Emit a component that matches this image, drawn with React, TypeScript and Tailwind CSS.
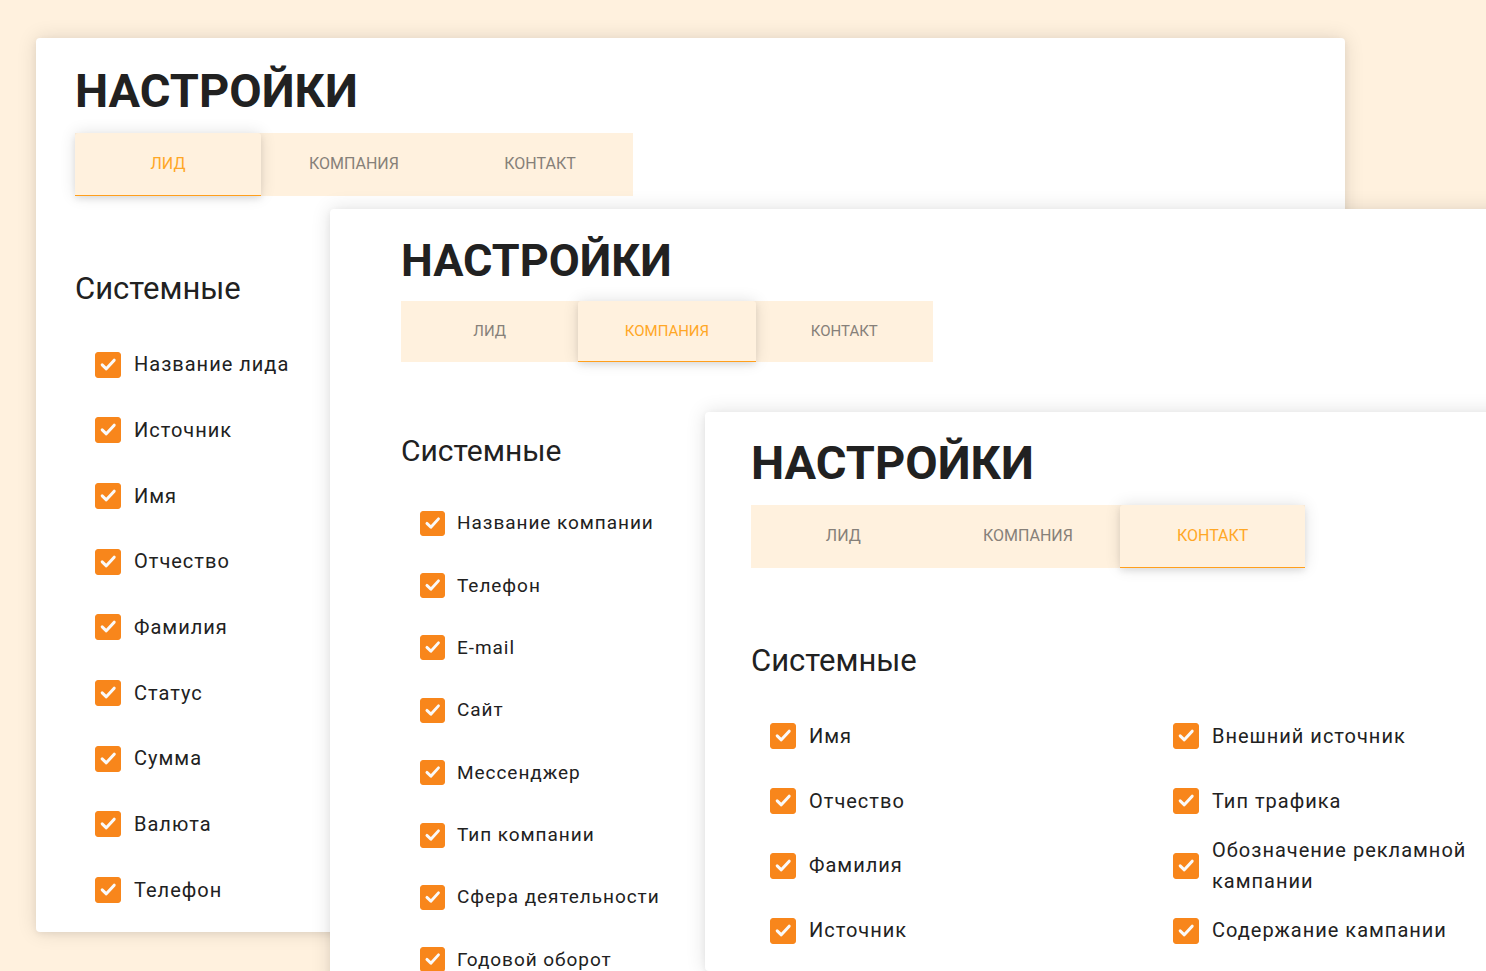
import { useId, useState } from "react";
import clsx from "clsx";

const TABS = ["ЛИД", "КОМПАНИЯ", "КОНТАКТ"];

const LEAD_FIELDS = [
  "Название лида",
  "Источник",
  "Имя",
  "Отчество",
  "Фамилия",
  "Статус",
  "Сумма",
  "Валюта",
  "Телефон",
];

const COMPANY_FIELDS = [
  "Название компании",
  "Телефон",
  "E-mail",
  "Сайт",
  "Мессенджер",
  "Тип компании",
  "Сфера деятельности",
  "Годовой оборот",
];

const CONTACT_FIELDS = [
  "Имя",
  "Отчество",
  "Фамилия",
  "Источник",
  "Внешний источник",
  "Тип трафика",
  "Обозначение рекламной кампании",
  "Содержание кампании",
];

type Size = "md" | "lg";

type SettingsPanelProps = {
  fields: string[];
  initialTab: number;
  size: Size;
  className: string;
  tabsClassName: string;
  listClassName: string;
};

function FieldCheckbox({ label, size }: { label: string; size: Size }) {
  const id = useId();
  const box = size === "lg" ? "size-[26px]" : "size-[25px]";

  return (
    <li className="flex items-center">
      <span className="grid shrink-0">
        <input
          id={id}
          type="checkbox"
          defaultChecked
          className={clsx(
            "peer appearance-none rounded-[3px] border border-[#f8861b] [grid-area:1/1] checked:bg-[#f8861b]",
            box
          )}
        />
        <svg
          viewBox="0 0 26 26"
          fill="none"
          stroke="#fafafa"
          strokeWidth="3"
          strokeLinecap="round"
          strokeLinejoin="round"
          aria-hidden="true"
          className={clsx(
            "pointer-events-none invisible [grid-area:1/1] peer-checked:visible",
            box
          )}
        >
          <path d="M7.2 12.9 11.3 16.8 19.2 8.2" />
        </svg>
      </span>
      <label
        htmlFor={id}
        className={clsx(
          "tracking-wider",
          size === "lg"
            ? "pl-[13px] text-[20px] leading-[31px]"
            : "pl-[12px] text-[19px] leading-[30px]"
        )}
      >
        {label}
      </label>
    </li>
  );
}

function Tabs({ initialTab, className }: { initialTab: number; className: string }) {
  const [active, setActive] = useState(initialTab);

  return (
    <div role="tablist" className={clsx("grid grid-cols-3 bg-[#fff1de]", className)}>
      {TABS.map((tab, index) => (
        <button
          key={tab}
          type="button"
          role="tab"
          aria-selected={index === active}
          onClick={() => setActive(index)}
          className={clsx(
            "border-b",
            index === active
              ? "rounded-t-[3px] border-[#ff9f1c] bg-[#fff1de] text-[#ffa726] shadow-[0_0_16px_rgba(0,0,0,0.12),0_3px_6px_rgba(0,0,0,0.08)]"
              : "border-transparent text-[#868079]"
          )}
        >
          {tab}
        </button>
      ))}
    </div>
  );
}

function SettingsPanel({
  fields,
  initialTab,
  size,
  className,
  tabsClassName,
  listClassName,
}: SettingsPanelProps) {
  const large = size === "lg";

  return (
    <section
      className={clsx(
        "flex flex-col rounded-[4px] bg-white [grid-area:1/1] shadow-[0_0_20px_rgba(0,0,0,0.12),0_2px_6px_rgba(0,0,0,0.06)]",
        className
      )}
    >
      <h1
        className={clsx(
          "font-bold",
          large ? "text-[47px] leading-[56px]" : "text-[45px] leading-[54px]"
        )}
      >
        НАСТРОЙКИ
      </h1>
      <div className={large ? "mt-[14px]" : "mt-[13px]"}>
        <Tabs initialTab={initialTab} className={tabsClassName} />
      </div>
      <h2
        className={clsx(
          "leading-[38px]",
          large ? "mt-[74px] text-[31px]" : "mt-[70px] text-[30px]"
        )}
      >
        Системные
      </h2>
      <ul
        className={clsx(
          "grid flex-1 auto-rows-fr",
          large ? "mt-[24px]" : "mt-[22px]",
          listClassName
        )}
      >
        {fields.map((field) => (
          <FieldCheckbox key={field} label={field} size={size} />
        ))}
      </ul>
    </section>
  );
}

export default function App() {
  return (
    <main className="grid h-screen grid-cols-1 grid-rows-1 overflow-hidden bg-[#fff1de] font-[Roboto,sans-serif] text-[#212121]">
      <SettingsPanel
        fields={LEAD_FIELDS}
        initialTab={0}
        size="lg"
        className="mt-[38px] mr-[141px] mb-[39px] ml-[36px] px-[39px] pt-[25px] pb-[9px]"
        tabsClassName="h-[63px] w-[558px] text-[16px]"
        listClassName="grid-cols-1 pl-[20px]"
      />
      <SettingsPanel
        fields={COMPANY_FIELDS}
        initialTab={1}
        size="md"
        className="mt-[209px] -mr-[40px] -mb-[20px] ml-[330px] px-[71px] pt-[25px]"
        tabsClassName="h-[61px] w-[532px] text-[15px]"
        listClassName="grid-cols-1 pl-[19px]"
      />
      <SettingsPanel
        fields={CONTACT_FIELDS}
        initialTab={2}
        size="lg"
        className="mt-[412px] -mr-[96px] ml-[705px] px-[46px] pt-[23px] pb-[8px]"
        tabsClassName="h-[63px] w-[554px] text-[16px]"
        listClassName="grid-flow-col grid-cols-2 grid-rows-4 gap-x-[40px] pl-[19px]"
      />
    </main>
  );
}
